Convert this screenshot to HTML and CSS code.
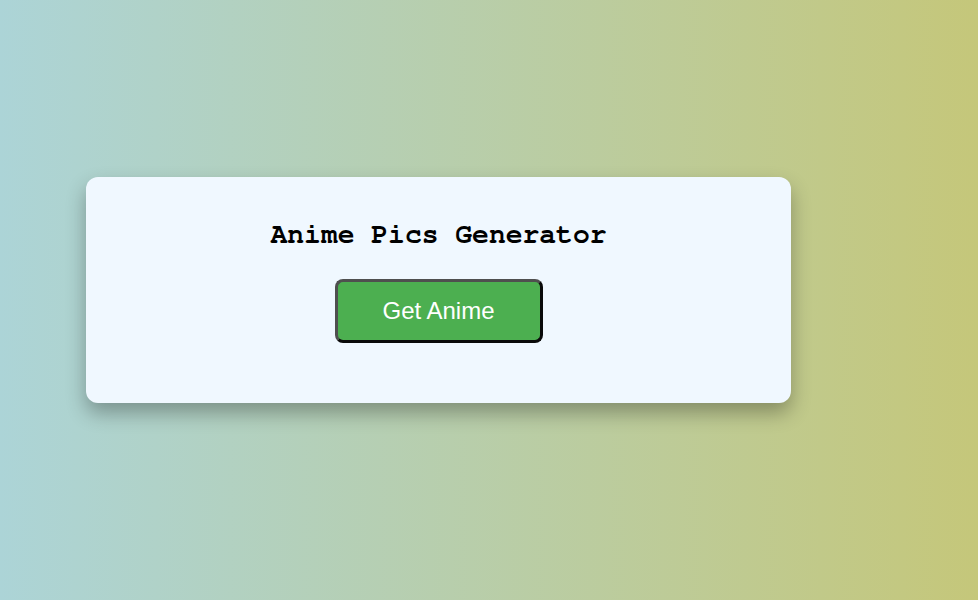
FILE: index.html
```html
<!DOCTYPE html>
<html>
<head>
<meta charset="utf-8">
<link rel="stylesheet" href="styles.css">
</head>
<body>
<div class="page">
  <div class="card">
    <h2 class="title">Anime Pics Generator</h2>
    <button class="btn">Get Anime</button>
  </div>
</div>
</body>
</html>
```
FILE: styles.css
```css
html, body {
  margin: 0;
  height: 100%;
}
body {
  background: linear-gradient(to right, #acd4d7, #c5c77a);
  font-family: "Liberation Sans", Arial, sans-serif;
}
.page {
  padding: 177px 0 0 86px;
}
.card {
  width: 705px;
  height: 226px;
  box-sizing: border-box;
  background: #f0f8ff;
  border-radius: 12px;
  box-shadow: 0 10px 20px rgba(0, 0, 0, 0.3);
  padding-top: 41px;
  text-align: center;
}
.title {
  margin: 0;
  font-family: "Nimbus Mono PS", "FreeMono", "Courier", "Liberation Mono", monospace;
  font-size: 28px;
  font-weight: bold;
  line-height: 34px;
  color: #000;
}
.btn {
  margin-top: 27px;
  width: 208px;
  height: 64px;
  background: #4caf50;
  color: #fff;
  font-family: "Liberation Sans", Arial, sans-serif;
  font-size: 24px;
  border-width: 3px;
  border-style: solid;
  border-color: #4f4f4f #0a0a0a #0a0a0a #4f4f4f;
  border-radius: 8px;
  padding: 0;
}
```
